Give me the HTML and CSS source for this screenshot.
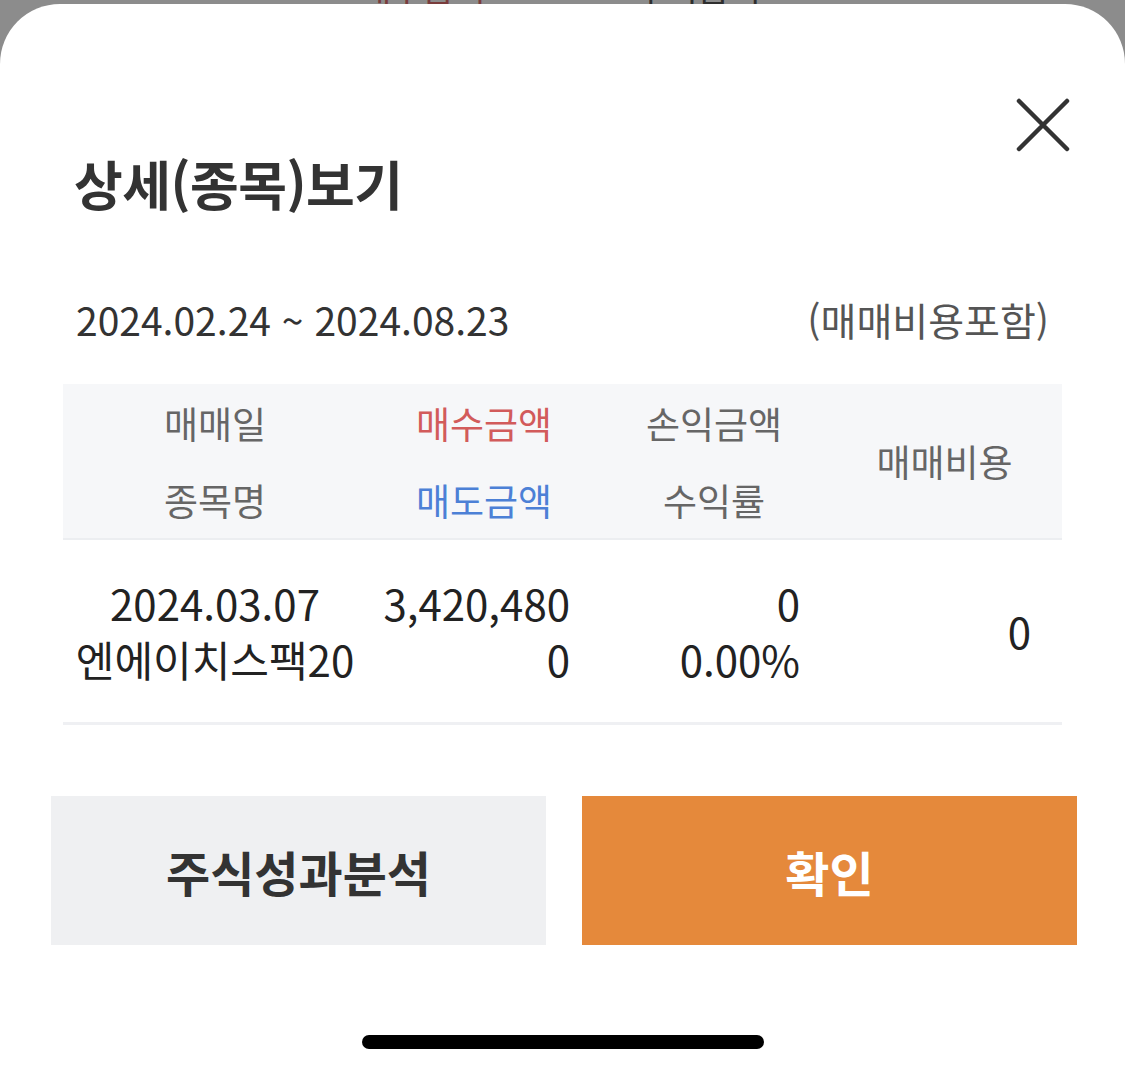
FILE: index.html
```html
<!DOCTYPE html>
<html lang="ko">
<head>
    <meta charset="UTF-8">
    <meta name="viewport" content="width=device-width, initial-scale=1.0">
    <title>상세(종목)보기</title>
    <link rel="stylesheet" href="styles.css">
</head>
<body>
    <!-- page behind the sheet, only its bottom edge shows -->
    <div class="behind" aria-hidden="true">
        <span class="behind-buy">매수금액</span>
        <span class="behind-profit">수익금액</span>
    </div>

    <div class="sheet">
        <div class="sheet-top">
            <button class="close-btn" aria-label="닫기">
                <svg width="54" height="54" viewBox="0 0 54 54">
                    <path d="M3 3 L51 51 M51 3 L3 51" stroke="#333" stroke-width="4.5" stroke-linecap="round" fill="none"/>
                </svg>
            </button>
        </div>

        <h1 class="title">상세(종목)보기</h1>

        <div class="period">
            <span class="period-date">2024.02.24 ~ 2024.08.23</span>
            <span class="period-note">(매매비용포함)</span>
        </div>

        <div class="table">
            <div class="table-head">
                <div class="col c1">
                    <span>매매일</span>
                    <span>종목명</span>
                </div>
                <div class="col c2">
                    <span class="buy">매수금액</span>
                    <span class="sell">매도금액</span>
                </div>
                <div class="col c3">
                    <span>손익금액</span>
                    <span>수익률</span>
                </div>
                <div class="col c4">
                    <span>매매비용</span>
                </div>
            </div>

            <div class="table-row">
                <div class="col c1">
                    <span>2024.03.07</span>
                    <span>엔에이치스팩20</span>
                </div>
                <div class="col c2 num">
                    <span>3,420,480</span>
                    <span>0</span>
                </div>
                <div class="col c3 num">
                    <span>0</span>
                    <span>0.00%</span>
                </div>
                <div class="col c4 num">
                    <span>0</span>
                </div>
            </div>
        </div>

        <div class="actions">
            <button class="btn btn-gray">주식성과분석</button>
            <button class="btn btn-orange">확인</button>
        </div>

        <div class="home-bar"></div>
    </div>
</body>
</html>
```

FILE: styles.css
```css
* {
    box-sizing: border-box;
}

html, body {
    margin: 0;
    padding: 0;
}

body {
    font-family: "Noto Sans CJK KR", "Noto Sans", sans-serif;
    background-color: #8c8c8c;
    width: 1125px;
    height: 1075px;
    overflow: hidden;
}

.behind {
    height: 4px;
    overflow: hidden;
    display: flex;
    font-size: 34px;
    line-height: 40px;
}

.behind span {
    margin-top: -32px;
}

.behind-buy {
    color: #7a3c3c;
    margin-left: 360px;
}

.behind-profit {
    color: #2e2e2e;
    margin-left: 150px;
}

.sheet {
    background-color: #fff;
    border-radius: 60px 60px 0 0;
    height: 1071px;
    display: flex;
    flex-direction: column;
}

.sheet-top {
    display: flex;
    justify-content: flex-end;
    padding: 94px 55px 0 0;
}

.close-btn {
    background: none;
    border: none;
    padding: 0;
    width: 54px;
    height: 54px;
    cursor: pointer;
}

.close-btn svg {
    display: block;
}

.title {
    margin: 0;
    padding-left: 74px;
    margin-top: -4px;
    font-size: 53px;
    font-weight: 700;
    color: #333;
    line-height: 70px;
    letter-spacing: -0.5px;
}

.period {
    display: flex;
    justify-content: space-between;
    align-items: center;
    padding: 0 76px;
    margin-top: 76px;
    height: 50px;
    font-size: 39px;
}

.period-date {
    color: #333;
}

.period-note {
    color: #555;
}

.table {
    margin: 40px 63px 0 63px;
}

.table-head {
    display: flex;
    background-color: #f6f7f9;
    border-bottom: 2px solid #eceef1;
    height: 156px;
    color: #666;
    font-size: 37px;
}

.table-row {
    display: flex;
    height: 185px;
    border-bottom: 3px solid #eff0f3;
    color: #222;
    font-size: 42px;
}

.col {
    display: flex;
    flex-direction: column;
    justify-content: center;
    align-items: center;
}

.table-head .col {
    gap: 27px;
}

.table-head .col span,
.table-row .col span {
    line-height: 50px;
}

.table-row .col {
    gap: 6px;
}

.c1 { width: 304px; }
.c2 { width: 234px; }
.c3 { width: 226px; }
.c4 { width: 235px; }

.table-row .num {
    align-items: flex-end;
}

.table-row .c2 { padding-right: 31px; }
.table-row .c3 { padding-right: 27px; }
.table-row .c4 { padding-right: 31px; }

.buy {
    color: #d25b5b;
}

.sell {
    color: #4c80d6;
}

.actions {
    display: flex;
    gap: 36px;
    padding: 0 48px 0 51px;
    margin-top: 71px;
}

.btn {
    flex: 1;
    height: 149px;
    border: none;
    font-family: inherit;
    font-size: 48px;
    font-weight: 700;
    cursor: pointer;
}

.btn-gray {
    background-color: #eff0f2;
    color: #333;
}

.btn-orange {
    background-color: #e5893b;
    color: #fff;
}

.home-bar {
    width: 402px;
    height: 14px;
    border-radius: 7px;
    background-color: #000;
    margin: 90px auto 0;
}
```
